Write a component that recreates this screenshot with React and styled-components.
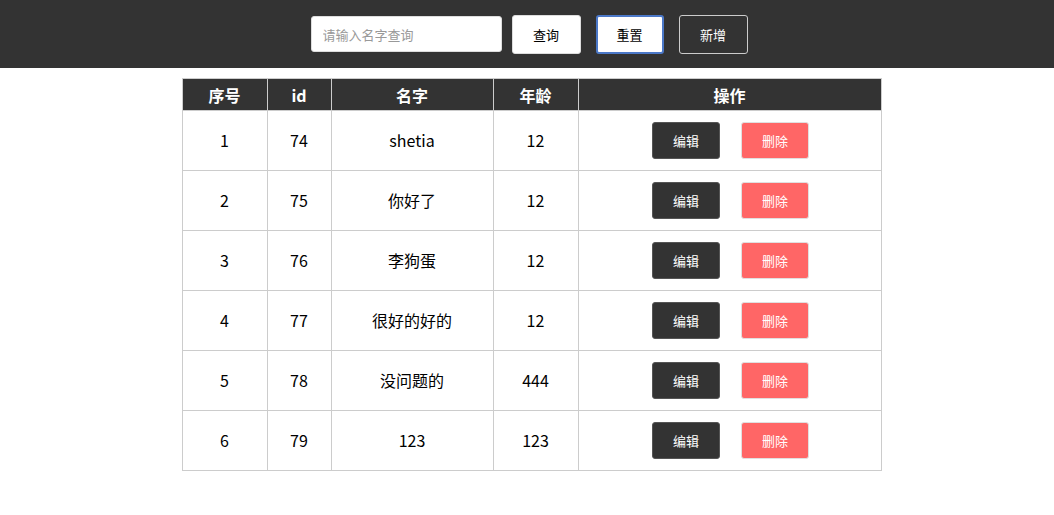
import React from "react";
import styled, { createGlobalStyle } from "styled-components";

const Global = createGlobalStyle`
  html, body { margin: 0; padding: 0; background: #fff; }
  body { font-family: "Noto Sans CJK SC", "Noto Sans", sans-serif; color: #000; }
  * { box-sizing: border-box; }
`;

const TopBar = styled.header`
  height: 68px;
  background: #333333;
  display: flex;
  align-items: center;
  justify-content: center;
  padding-left: 4px;
`;

const SearchInput = styled.input`
  width: 191px;
  height: 36px;
  border: 1px solid #ddd;
  border-radius: 3px;
  padding: 0 11px;
  font-family: inherit;
  font-size: 13px;
  color: #333;
  outline: none;
  margin-right: 10px;
  &::placeholder { color: #999; }
`;

const BarButton = styled.button`
  width: ${(p) => (p.$focused ? "68px" : "69px")};
  height: 39px;
  border-radius: 3px;
  font-family: inherit;
  font-size: 13px;
  cursor: pointer;
  margin-left: ${(p) => (p.$first ? "0" : "15px")};
  background: ${(p) => (p.$ghost ? "transparent" : "#fff")};
  color: ${(p) => (p.$ghost ? "#fff" : "#000")};
  border: ${(p) =>
    p.$focused ? "2px solid #4b78c8" : p.$ghost ? "1px solid #ccc" : "1px solid #ddd"};
`;

const Wrap = styled.main`
  display: flex;
  justify-content: center;
  padding: 10px 0 0 9px;
`;

const Table = styled.table`
  width: 699px;
  border-collapse: collapse;
  border: 1px solid #ccc;
  table-layout: fixed;
`;

const Th = styled.th`
  height: 32px;
  background: #333333;
  color: #fff;
  font-size: 16px;
  font-weight: 700;
  border: 1px solid #ccc;
  padding: 0;
  width: ${(p) => p.$w}px;
`;

const Td = styled.td`
  height: 60px;
  border: 1px solid #ccc;
  text-align: center;
  font-size: 16px;
  padding: 0 0 2px;
`;

const Actions = styled.div`
  display: flex;
  justify-content: center;
  gap: 21px;
  padding: 2px 0 0 2px;
`;

const OpButton = styled.button`
  width: 68px;
  height: 37px;
  border-radius: 3px;
  font-family: inherit;
  font-size: 13px;
  color: #fff;
  cursor: pointer;
  background: ${(p) => (p.$danger ? "#ff6666" : "#333333")};
  border: 1px solid ${(p) => (p.$danger ? "#e0e0e0" : "#555")};
`;

const rows = [
  { n: 1, id: 74, name: "shetia", age: 12 },
  { n: 2, id: 75, name: "你好了", age: 12 },
  { n: 3, id: 76, name: "李狗蛋", age: 12 },
  { n: 4, id: 77, name: "很好的好的", age: 12 },
  { n: 5, id: 78, name: "没问题的", age: 444 },
  { n: 6, id: 79, name: "123", age: 123 },
];

export default function App() {
  return (
    <>
      <Global />
      <TopBar>
        <SearchInput placeholder="请输入名字查询" />
        <BarButton $first>查询</BarButton>
        <BarButton $focused>重置</BarButton>
        <BarButton $ghost>新增</BarButton>
      </TopBar>
      <Wrap>
        <Table>
          <thead>
            <tr>
              <Th $w={85}>序号</Th>
              <Th $w={64}>id</Th>
              <Th $w={162}>名字</Th>
              <Th $w={85}>年龄</Th>
              <Th $w={303}>操作</Th>
            </tr>
          </thead>
          <tbody>
            {rows.map((r) => (
              <tr key={r.n}>
                <Td>{r.n}</Td>
                <Td>{r.id}</Td>
                <Td>{r.name}</Td>
                <Td>{r.age}</Td>
                <Td>
                  <Actions>
                    <OpButton>编辑</OpButton>
                    <OpButton $danger>删除</OpButton>
                  </Actions>
                </Td>
              </tr>
            ))}
          </tbody>
        </Table>
      </Wrap>
    </>
  );
}
